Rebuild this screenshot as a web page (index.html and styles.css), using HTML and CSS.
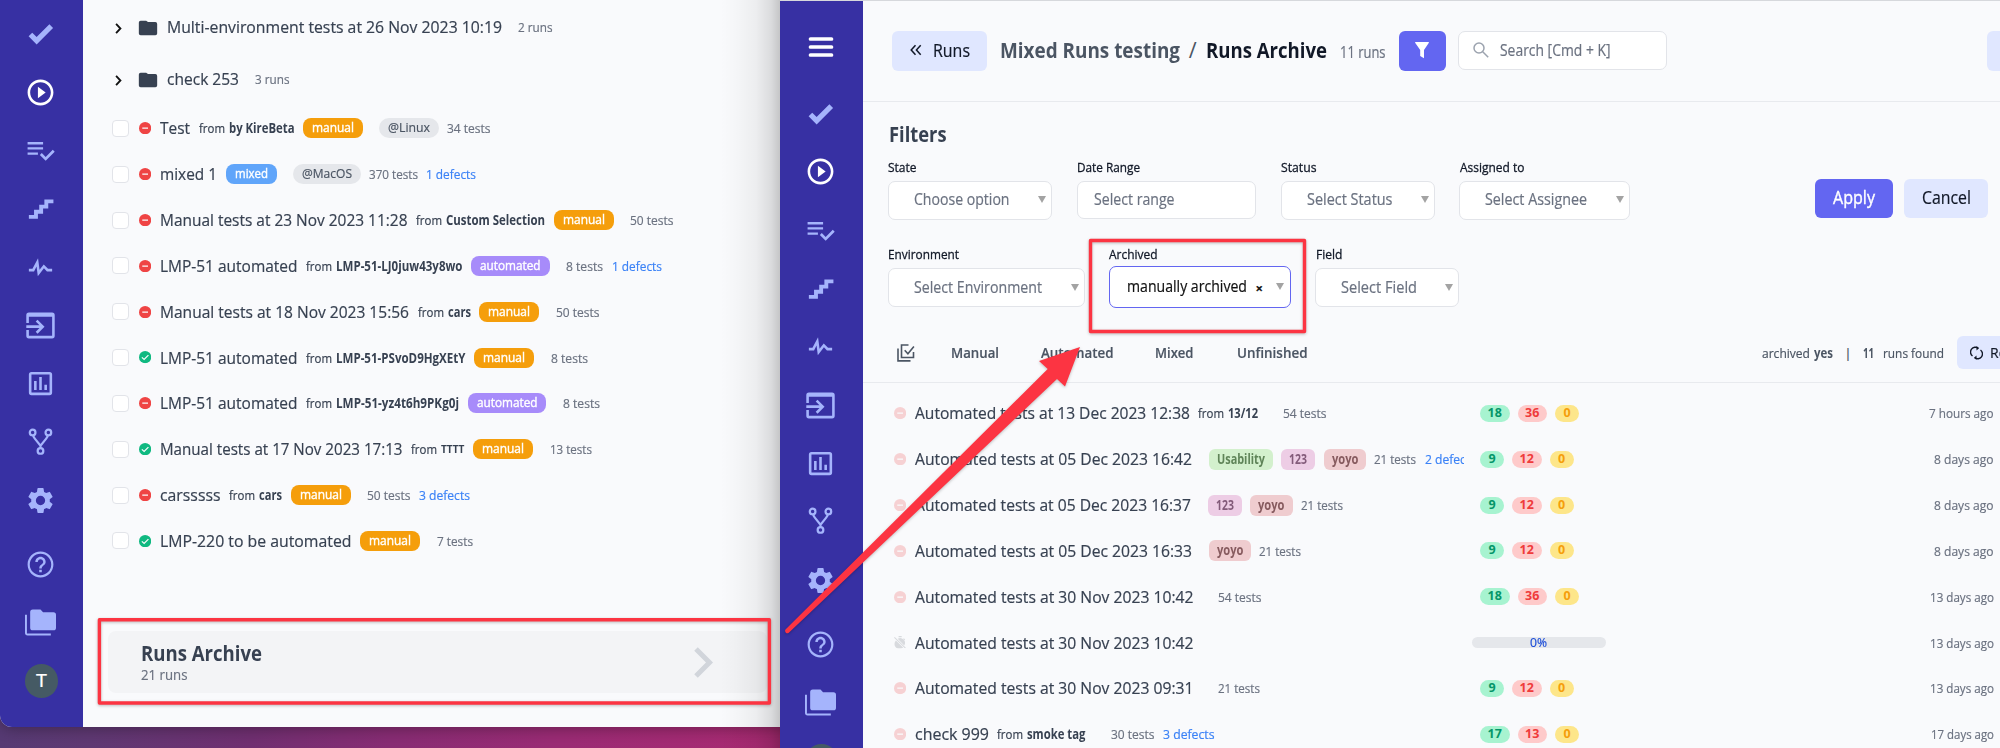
FILE: index.html
```html
<!DOCTYPE html>
<html lang="en">
<head>
<meta charset="utf-8">
<title>Runs Archive</title>
<link rel="stylesheet" href="styles.css">
</head>
<body>
<svg class="sprite" aria-hidden="true">
  <symbol id="i-check" viewBox="0 0 24 24"><path d="M9 20.42 2.79 14.21 5.62 11.38 9 14.77 18.88 4.88 21.71 7.71Z"/></symbol>
  <symbol id="i-play" viewBox="0 0 24 24"><path d="M10 16.5l6-4.5-6-4.5v9zM12 2C6.48 2 2 6.48 2 12s4.480 10 10 10 10-4.480 10-10S17.520 2 12 2zm0 18c-4.410 0-8-3.590-8-8s3.590-8 8-8 8 3.590 8 8-3.590 8-8 8z"/></symbol>
  <symbol id="i-list" viewBox="0 0 24 24"><path d="M14 9.500H2v1.800h12v-1.800zm0-4H2v1.800h12V5.500zM2 15.300h8v-1.800H2v1.800zM21.500 11.500 23 13l-6.990 7-4.510-4.500L13 14l3.010 3 5.490-5.500z"/></symbol>
  <symbol id="i-stairs" viewBox="0 0 24 24"><path d="M15 5v4h-4v4H7v4H3v3h7v-4h4v-4h4V8h4V5h-7Z"/></symbol>
  <symbol id="i-pulse" viewBox="0 0 24 24"><path d="M3 13h2.790L10.100 4.790l1.180 8.960L14.500 9.660 17.830 13H21v2h-4l-2.330-2.330-4.750 6.060-.980-7.420L7 15H3v-2Z"/></symbol>
  <symbol id="i-import" viewBox="0 0 24 24"><path d="M21 2H3a2 2 0 0 0-2 2v6h2V5.300h18V20H3v-4.500H1V20a2 2 0 0 0 2 2h18a2 2 0 0 0 2-2V4a2 2 0 0 0-2-2z"/><path d="M1 12.900h12M9 8.200l4.700 4.700L9 17.600" fill="none" stroke="currentColor" stroke-width="2"/></symbol>
  <symbol id="i-chart" viewBox="0 0 24 24"><path d="M9 17H7v-7h2v7zm4 0h-2V7h2v10zm4 0h-2v-4h2v4zm2 2H5V5h14v14zm0-16H5a2 2 0 0 0-2 2v14a2 2 0 0 0 2 2h14a2 2 0 0 0 2-2V5a2 2 0 0 0-2-2z"/></symbol>
  <symbol id="i-fork" viewBox="0 0 24 24"><g fill="none" stroke="currentColor" stroke-width="1.700"><circle cx="5.900" cy="4.200" r="2.200"/><circle cx="18.100" cy="4.200" r="2.200"/><circle cx="12" cy="18.500" r="2.200"/><path d="M6.200 6.400c.2 1 .5 1.500 1.400 2.600L12 14.500l4.400-5.500c.9-1.100 1.200-1.600 1.400-2.600M12 14.200v2.200"/></g></symbol>
  <symbol id="i-gear" viewBox="0 0 24 24"><path d="M19.140 12.940c.04-.3.06-.61.06-.94s-.02-.64-.07-.94l2.030-1.580a.49.49 0 0 0 .12-.61l-1.920-3.320a.488.488 0 0 0-.59-.22l-2.390.96c-.5-.38-1.030-.7-1.620-.94l-.36-2.540a.484.484 0 0 0-.48-.41h-3.840c-.24 0-.43.17-.47.41l-.36 2.540c-.59.24-1.130.57-1.620.94l-2.390-.96c-.22-.08-.47 0-.59.22L2.740 8.870c-.12.21-.08.47.12.61l2.030 1.580c-.05.3-.09.63-.09.94s.02.64.07.94l-2.030 1.580a.49.49 0 0 0-.12.61l1.920 3.320c.12.22.37.29.59.22l2.390-.96c.5.38 1.030.7 1.620.94l.36 2.540c.05.24.24.41.48.41h3.840c.24 0 .44-.17.47-.41l.36-2.540c.59-.24 1.130-.56 1.620-.94l2.390.96c.22.08.47 0 .59-.22l1.920-3.320c.12-.22.07-.47-.12-.61l-2.010-1.580zM12 15.600A3.600 3.600 0 1 1 12 8.400a3.600 3.600 0 0 1 0 7.200z"/></symbol>
  <symbol id="i-help" viewBox="0 0 24 24"><path d="M11 18h2v-2h-2v2zm1-16C6.480 2 2 6.480 2 12s4.480 10 10 10 10-4.480 10-10S17.520 2 12 2zm0 18.300a8.300 8.300 0 1 1 0-16.600 8.300 8.300 0 0 1 0 16.600zM12 6c-2.210 0-4 1.790-4 4h1.900c0-1.200.98-2.100 2.100-2.100s2.100.9 2.100 2.100c0 2-3.050 1.750-3.050 5h1.900c0-2.250 3.050-2.500 3.050-5 0-2.210-1.790-4-4-4z"/></symbol>
  <symbol id="i-folders" viewBox="0 0 24 24"><path d="M22 4h-8l-2-2H6a2 2 0 0 0-2 2v12a2 2 0 0 0 2 2h16a2 2 0 0 0 2-2V6a2 2 0 0 0-2-2M1.500 6H0v14a2 2 0 0 0 2 2h18v-1.500H1.500V6Z"/></symbol>
  <symbol id="i-folder" viewBox="0 0 24 24"><path d="M10 4H4a2 2 0 0 0-2 2v12a2 2 0 0 0 2 2h16a2 2 0 0 0 2-2V7.500a2 2 0 0 0-2-2h-8L10 4Z"/></symbol>
  <symbol id="i-menu" viewBox="0 0 24 24"><path d="M1.500 4h21M1.500 12h21M1.500 20h21" stroke="currentColor" stroke-width="3.700" stroke-linecap="round"/></symbol>
  <symbol id="i-failed" viewBox="0 0 12 12"><circle cx="6" cy="6" r="6"/><path d="M3.200 6h5.600" stroke="#fafbfc" stroke-width="1.300"/></symbol>
  <symbol id="i-passed" viewBox="0 0 12 12"><circle cx="6" cy="6" r="6"/><path d="m2.800 6.200 2.200 2.100 4.200-4.300" fill="none" stroke="#fafbfc" stroke-width="1.200"/></symbol>
  <symbol id="i-timeroff" viewBox="0 0 12 12"><path d="M4.500 0h3v1.300h-3zM3.600 2.700A4.700 4.700 0 0 1 10 9.200zM1.900 4.300l7 7A4.700 4.700 0 0 1 1.900 4.300z"/><path d="m.4 1.300 10.800 10.500M9.300 2.600l1.200 1.100" stroke="currentColor" stroke-width="1"/></symbol>
  <symbol id="i-arrow" viewBox="0 0 8 7"><path d="M0 0h8L4 7z"/></symbol>
</svg>

<div class="desktop">
  <section class="window window-back">
    <nav class="sidebar">
      <a class="nav"><svg><use href="#i-check"/></svg></a>
      <a class="nav active"><svg><use href="#i-play"/></svg></a>
      <a class="nav"><svg><use href="#i-list"/></svg></a>
      <a class="nav"><svg><use href="#i-stairs"/></svg></a>
      <a class="nav"><svg><use href="#i-pulse"/></svg></a>
      <a class="nav"><svg><use href="#i-import"/></svg></a>
      <a class="nav"><svg><use href="#i-chart"/></svg></a>
      <a class="nav"><svg><use href="#i-fork"/></svg></a>
      <a class="nav"><svg><use href="#i-gear"/></svg></a>
      <a class="nav help"><svg><use href="#i-help"/></svg></a>
      <a class="nav"><svg><use href="#i-folders"/></svg></a>
      <span class="avatar">T</span>
    </nav>
    <main class="runs">
      <div class="group"><svg class="chev" viewBox="0 0 6 10"><path d="m1 .8 4 4.200-4 4.200"/></svg><svg class="folder"><use href="#i-folder"/></svg><b class="title" data-w="335">Multi-environment tests at 26 Nov 2023 10:19</b><span class="count wide" data-w="34.500">2 runs</span></div>
      <div class="group"><svg class="chev" viewBox="0 0 6 10"><path d="m1 .8 4 4.200-4 4.200"/></svg><svg class="folder"><use href="#i-folder"/></svg><b class="title" data-w="72">check 253</b><span class="count wide" data-w="34.500">3 runs</span></div>

      <div class="run"><i class="box"></i><svg class="st fail"><use href="#i-failed"/></svg><b class="title" data-w="30">Test</b><span class="from" data-w="26">from</span><strong data-w="65.500">by KireBeta</strong><span class="pill manual" data-w="42">manual</span><span class="pill env" data-w="42">@Linux</span><span class="count" data-w="43.500">34 tests</span></div>
      <div class="run"><i class="box"></i><svg class="st fail"><use href="#i-failed"/></svg><b class="title" data-w="57">mixed 1</b><span class="pill mixed" data-w="33">mixed</span><span class="pill env" data-w="50">@MacOS</span><span class="count" data-w="49">370 tests</span><a class="defects" data-w="50">1 defects</a></div>
      <div class="run"><i class="box"></i><svg class="st fail"><use href="#i-failed"/></svg><b class="title" data-w="247.500">Manual tests at 23 Nov 2023 11:28</b><span class="from" data-w="26">from</span><strong data-w="99">Custom Selection</strong><span class="pill manual" data-w="42">manual</span><span class="count wide" data-w="43.500">50 tests</span></div>
      <div class="run"><i class="box"></i><svg class="st fail"><use href="#i-failed"/></svg><b class="title" data-w="137.500">LMP-51 automated</b><span class="from" data-w="26">from</span><strong data-w="126.500">LMP-51-LJ0juw43y8wo</strong><span class="pill auto" data-w="60.500">automated</span><span class="count wide" data-w="37">8 tests</span><a class="defects" data-w="50">1 defects</a></div>
      <div class="run"><i class="box"></i><svg class="st fail"><use href="#i-failed"/></svg><b class="title" data-w="249">Manual tests at 18 Nov 2023 15:56</b><span class="from" data-w="26">from</span><strong data-w="23">cars</strong><span class="pill manual" data-w="42">manual</span><span class="count wide" data-w="43.500">50 tests</span></div>
      <div class="run"><i class="box"></i><svg class="st pass"><use href="#i-passed"/></svg><b class="title" data-w="137.500">LMP-51 automated</b><span class="from" data-w="26">from</span><strong data-w="129.500">LMP-51-PSvoD9HgXEtY</strong><span class="pill manual" data-w="42">manual</span><span class="count wide" data-w="37">8 tests</span></div>
      <div class="run"><i class="box"></i><svg class="st fail"><use href="#i-failed"/></svg><b class="title" data-w="137.500">LMP-51 automated</b><span class="from" data-w="26">from</span><strong data-w="123">LMP-51-yz4t6h9PKg0j</strong><span class="pill auto" data-w="60.500">automated</span><span class="count wide" data-w="37">8 tests</span></div>
      <div class="run"><i class="box"></i><svg class="st pass"><use href="#i-passed"/></svg><b class="title" data-w="242.500">Manual tests at 17 Nov 2023 17:13</b><span class="from" data-w="26">from</span><strong data-w="23.500" class="tiny">ТТТТ</strong><span class="pill manual" data-w="42">manual</span><span class="count wide" data-w="42">13 tests</span></div>
      <div class="run"><i class="box"></i><svg class="st fail"><use href="#i-failed"/></svg><b class="title" data-w="60.500">carsssss</b><span class="from" data-w="26">from</span><strong data-w="23">cars</strong><span class="pill manual" data-w="42">manual</span><span class="count wide" data-w="43.500">50 tests</span><a class="defects" data-w="51">3 defects</a></div>
      <div class="run"><i class="box"></i><svg class="st pass"><use href="#i-passed"/></svg><b class="title" data-w="191.500">LMP-220 to be automated</b><span class="pill manual" data-w="42">manual</span><span class="count wide" data-w="36">7 tests</span></div>

      <div class="archive">
        <div>
          <h2 data-w="121">Runs Archive</h2>
          <p data-w="46.500">21 runs</p>
        </div>
        <svg viewBox="0 0 19 31"><path d="M2 2l13.500 13.500L2 29"/></svg>
      </div>
    </main>
  </section>

  <section class="window window-front">
    <nav class="sidebar">
      <a class="nav menu"><svg><use href="#i-menu"/></svg></a>
      <a class="nav"><svg><use href="#i-check"/></svg></a>
      <a class="nav active"><svg><use href="#i-play"/></svg></a>
      <a class="nav"><svg><use href="#i-list"/></svg></a>
      <a class="nav"><svg><use href="#i-stairs"/></svg></a>
      <a class="nav"><svg><use href="#i-pulse"/></svg></a>
      <a class="nav"><svg><use href="#i-import"/></svg></a>
      <a class="nav"><svg><use href="#i-chart"/></svg></a>
      <a class="nav"><svg><use href="#i-fork"/></svg></a>
      <a class="nav"><svg><use href="#i-gear"/></svg></a>
      <a class="nav help"><svg><use href="#i-help"/></svg></a>
      <a class="nav"><svg><use href="#i-folders"/></svg></a>
      <span class="avatar"></span>
    </nav>
    <main class="page">
      <header class="topbar">
        <button class="back"><svg viewBox="0 0 12 12"><path d="M5.500 1.200 1.200 6l4.300 4.800M10.700 1.200 6.400 6l4.300 4.800"/></svg><span data-w="37">Runs</span></button>
        <h1><span class="project" data-w="180">Mixed Runs testing</span><span class="slash">/</span><span data-w="121">Runs Archive</span></h1>
        <span class="total" data-w="45.500">11 runs</span>
        <button class="funnel"><svg viewBox="0 0 14 17"><path d="M.3 0h13.400c.3.3.3.700 0 1L9 8v8.300L5.200 14V8L.3 1C0 .7 0 .3.300 0z"/></svg></button>
        <div class="search"><svg viewBox="0 0 16 16"><circle cx="6" cy="6" r="5"/><path d="m9.700 9.700 5.500 5.500"/></svg><span data-w="110.500">Search [Cmd + K]</span></div>
        <span class="more"></span>
      </header>

      <section class="filters">
        <h3 data-w="57.500">Filters</h3>
        <div class="line">
          <div class="field f-state"><label data-w="28.500">State</label><div class="select"><span data-w="95.500">Choose option</span><svg><use href="#i-arrow"/></svg></div></div>
          <div class="field f-date"><label data-w="63">Date Range</label><div class="select plain"><span data-w="80.500">Select range</span></div></div>
          <div class="field f-status"><label data-w="35.500">Status</label><div class="select"><span data-w="85.500">Select Status</span><svg><use href="#i-arrow"/></svg></div></div>
          <div class="field f-assign"><label data-w="64.500">Assigned to</label><div class="select"><span data-w="102">Select Assignee</span><svg><use href="#i-arrow"/></svg></div></div>
          <div class="actions"><button class="apply"><span data-w="42">Apply</span></button><button class="cancel"><span data-w="49">Cancel</span></button></div>
        </div>
        <div class="line second">
          <div class="field f-env"><label data-w="71">Environment</label><div class="select"><span data-w="128">Select Environment</span><svg><use href="#i-arrow"/></svg></div></div>
          <div class="field f-arch"><label data-w="48.500">Archived</label><div class="select focused"><span data-w="120">manually archived</span><em>×</em><svg><use href="#i-arrow"/></svg></div></div>
          <div class="field f-field"><label data-w="26.500">Field</label><div class="select"><span data-w="76">Select Field</span><svg><use href="#i-arrow"/></svg></div></div>
        </div>
      </section>

      <div class="tabs">
        <svg class="multi" viewBox="0 0 18 18"><path d="M11.500 1h-7v12.500h12V8M1 4.500v12.400h12.500M7.700 6.300l3.200 3.400 6-7.200"/></svg>
        <span class="tab t1" data-w="48">Manual</span>
        <span class="tab t2" data-w="72.500">Automated</span>
        <span class="tab t3" data-w="38.500">Mixed</span>
        <span class="tab t4" data-w="70.500">Unfinished</span>
        <div class="found"><span data-w="48">archived</span><strong class="yes" data-w="19">yes</strong><span class="bar">|</span><strong data-w="11">11</strong><span class="rf" data-w="61">runs found</span>
          <button class="reset"><svg viewBox="0 0 13 14"><path d="M8.300 2.200A4.800 4.800 0 0 0 2.500 10M4.700 11.800A4.800 4.800 0 0 0 10.500 4"/><path class="solid" d="M6.500 0v4.600L9 2.200zM6.500 14V9.400L4 11.800z"/></svg><span data-w="36">Reset</span></button></div>
      </div>

      <div class="list">
        <div class="item"><div class="main"><svg class="st fail"><use href="#i-failed"/></svg><b class="title" data-w="275">Automated tests at 13 Dec 2023 12:38</b><span class="from" data-w="26">from</span><strong data-w="30">13/12</strong><span class="count xwide" data-w="43.500">54 tests</span></div><div class="res"><i class="ok two">18</i><i class="ko two">36</i><i class="sk">0</i></div><time data-w="64.500">7 hours ago</time></div>
        <div class="item"><div class="main"><svg class="st fail"><use href="#i-failed"/></svg><b class="title" data-w="277">Automated tests at 05 Dec 2023 16:42</b><span class="tag green first" data-w="48">Usability</span><span class="tag violet" data-w="18">123</span><span class="tag rose" data-w="26.500">yoyo</span><span class="count" data-w="42">21 tests</span><a class="defects" data-w="51">2 defects</a></div><div class="res"><i class="ok">9</i><i class="ko two">12</i><i class="sk">0</i></div><time data-w="59.500">8 days ago</time></div>
        <div class="item"><div class="main"><svg class="st fail"><use href="#i-failed"/></svg><b class="title" data-w="276">Automated tests at 05 Dec 2023 16:37</b><span class="tag violet first" data-w="18">123</span><span class="tag rose" data-w="26.500">yoyo</span><span class="count" data-w="42">21 tests</span></div><div class="res"><i class="ok">9</i><i class="ko two">12</i><i class="sk">0</i></div><time data-w="59.500">8 days ago</time></div>
        <div class="item"><div class="main"><svg class="st fail"><use href="#i-failed"/></svg><b class="title" data-w="277">Automated tests at 05 Dec 2023 16:33</b><span class="tag rose first" data-w="26.500">yoyo</span><span class="count" data-w="42">21 tests</span></div><div class="res"><i class="ok">9</i><i class="ko two">12</i><i class="sk">0</i></div><time data-w="59.500">8 days ago</time></div>
        <div class="item"><div class="main"><svg class="st fail"><use href="#i-failed"/></svg><b class="title" data-w="278.500">Automated tests at 30 Nov 2023 10:42</b><span class="count xwide" data-w="43.500">54 tests</span></div><div class="res"><i class="ok two">18</i><i class="ko two">36</i><i class="sk">0</i></div><time data-w="64">13 days ago</time></div>
        <div class="item"><div class="main"><svg class="st off"><use href="#i-timeroff"/></svg><b class="title" data-w="278.500">Automated tests at 30 Nov 2023 10:42</b></div><div class="res"><div class="progress"><span data-w="17">0%</span></div></div><time data-w="64">13 days ago</time></div>
        <div class="item"><div class="main"><svg class="st fail"><use href="#i-failed"/></svg><b class="title" data-w="278.500">Automated tests at 30 Nov 2023 09:31</b><span class="count xwide" data-w="42">21 tests</span></div><div class="res"><i class="ok">9</i><i class="ko two">12</i><i class="sk">0</i></div><time data-w="64">13 days ago</time></div>
        <div class="item"><div class="main"><svg class="st fail"><use href="#i-failed"/></svg><b class="title" data-w="74">check 999</b><span class="from" data-w="26">from</span><strong data-w="58.500">smoke tag</strong><span class="count xwide" data-w="43.500">30 tests</span><a class="defects" data-w="51.500">3 defects</a></div><div class="res"><i class="ok two">17</i><i class="ko two">13</i><i class="sk">0</i></div><time data-w="63">17 days ago</time></div>
      </div>
    </main>
  </section>

  <!-- Red annotations drawn over both windows -->
  <svg class="marks" viewBox="0 0 2000 748">
    <rect x="99.400" y="619.700" width="670" height="83.300"/>
    <rect x="1090.500" y="240.500" width="214" height="91"/>
    <path d="M785.500 629.500 1047.700 369 1039 361 1080 347 1065 386.500 1057 379 788.500 633a2.400 2.400 0 0 1-3-3.500z"/>
  </svg>
</div>
<script src="script.js"></script>
</body>
</html>
```
FILE: styles.css
```css
* { box-sizing: border-box; }
body { margin: 0; font-family: "Open Sans", "Noto Sans", sans-serif; color: #374151; -webkit-text-stroke: .2px; }
h1, h2, h3, p { margin: 0; }
i, em { font-style: normal; }
svg { display: block; flex: none; fill: currentColor; }
.sprite { position: absolute; width: 0; height: 0; }
[data-w] { display: block; flex: none; white-space: nowrap; }
.cond { display: inline-block; transform-origin: 0 50%; }
button { font: inherit; color: #111827; border: 0; padding: 0; border-radius: 6px; background: #e0e7ff; display: flex; align-items: center; flex: none; text-align: left; }

.desktop { position: relative; width: 2000px; height: 748px; overflow: hidden; background: linear-gradient(90deg, #563a73 0, #5e3872 90px, #6f2f70 250px, #872c73 390px, #9a2b74 560px, #a92a72 780px); }
.window { position: absolute; display: flex; background: #f9fafc; overflow: hidden; }
.window-back { left: 0; top: 0; width: 800px; height: 727px; border-radius: 0 0 0 12px; box-shadow: 0 2px 14px rgba(0,0,0,.3); }
.window-front { left: 780px; top: 0; width: 1220px; height: 748px; border-top: 1px solid #d6d8dc; }
.desktop::before { content: ""; position: absolute; z-index: 1; left: 720px; top: 0; width: 60px; height: 748px; background: linear-gradient(90deg, transparent, rgba(0,0,0,.015) 25%, rgba(0,0,0,.05) 60%, rgba(0,0,0,.12) 85%, rgba(0,0,0,.21)); }

.sidebar { width: 83px; flex: none; background: #3730a3; color: #a5b4fc; display: flex; flex-direction: column; align-items: center; padding: 4.8px 2px 0 0; }
.nav { display: flex; align-items: center; justify-content: center; height: 58.330px; flex: none; }
.nav svg { width: 31px; height: 31px; }
.nav.active, .nav.menu { color: #fff; }
.nav.help { margin-top: 5.500px; }
.nav.menu { height: 67px; margin-bottom: 4px; }
.nav.menu svg { width: 28px; height: 24px; }
.window-front .sidebar { padding-top: 12.500px; }
.avatar { width: 33.500px; height: 33.500px; margin: 12.500px 0 0 2px; border-radius: 50%; background: #455a64; color: #fff; font: 19px/33px Roboto, sans-serif; text-align: center; flex: none; }

.title { font-weight: 400; font-size: 17px; line-height: 24px; }
.from, strong, .count, .defects { font-size: 13.500px; line-height: 20px; }
strong { font-weight: 700; -webkit-text-stroke: 0; }
.count { color: #6b7280; margin-left: 8px; }
.count.wide { margin-left: 16.500px; }
.count.xwide { margin-left: 25px; }
.defects { color: #3b82f6; margin-left: 8.500px; }
.from { margin-left: 8.500px; }
.from + strong { margin-left: 4px; }
strong.tiny { font-size: 10.500px; }
.st { width: 12.300px; height: 12.300px; margin-right: 9px; }
.fail { color: #ef4444; }
.pass { color: #10b981; }
.pill { height: 20px; padding: 0 9px; border-radius: 10px; margin-left: 8.500px; color: #fff; font-size: 13.500px; line-height: 19px; font-weight: 500; box-sizing: content-box; -webkit-text-stroke: .4px; }
.manual { background: #f59e0b; border-radius: 8px; }
.mixed { background: #60a5fa; border-radius: 8px; }
.auto { background: #a78bfa; border-radius: 8px; }
.env { background: #e5e7eb; color: #4b5563; margin-left: 16px; font-weight: 400; -webkit-text-stroke: .2px; }

.runs { flex: 1; padding-top: 1px; }
.group { display: flex; align-items: center; height: 52px; padding-left: 32px; }
.chev { width: 6.500px; height: 11px; fill: none; stroke: #111; stroke-width: 1.700; margin-top: 3px; }
.folder { width: 22px; height: 22px; margin: 2px 7.500px 0 15.500px; }
.run { display: flex; align-items: center; height: 45.850px; padding-left: 29px; }
.group + .run { margin-top: .4px; }
.box { width: 17px; height: 17px; border: 1px solid #e2e4e9; border-radius: 4px; background: #fff; margin-right: 10px; flex: none; }
.archive { margin: 67.200px 0 0 25px; width: 659px; height: 62px; border-radius: 8px; background: #f3f4f6; padding: 9px 54px 0 33px; display: flex; justify-content: space-between; }
.archive h2 { font-size: 21.500px; line-height: 26px; }
h1, h2, h3 { -webkit-text-stroke: 0; }
.archive p { font-size: 15px; line-height: 16px; color: #6b7280; }
.archive svg { width: 19px; height: 31px; margin-top: 7px; fill: none; stroke: #d1d5db; stroke-width: 5; }

.page { flex: 1; min-width: 0; }
.topbar { height: 101px; display: flex; align-items: center; padding: 0 0 1px 29px; border-bottom: 1px solid #e8eaee; }
.back { width: 95px; height: 40px; padding: 0 0 1px 18px; font-size: 17.500px; }
.back svg { width: 12px; height: 12px; fill: none; stroke: #111827; stroke-width: 1.500; margin-right: 11px; }
h1 { display: flex; align-items: center; font-size: 21.500px; line-height: 28px; color: #111827; margin-left: 12.500px; padding-bottom: 1px; }
.project { color: #4b5563; }
.slash { font-weight: 400; color: #4b5563; width: 26.500px; text-align: center; }
.total { font-size: 15.500px; color: #6b7280; margin: 2px 0 0 13px; }
.funnel { width: 47px; height: 40px; margin-left: 13px; justify-content: center; background: #6366f1; }
.funnel svg { width: 14px; height: 17px; color: #fff; }
.search { width: 209px; height: 39px; margin-left: 12px; padding: 0 0 1px 14px; display: flex; align-items: center; border: 1px solid #e2e4e9; border-radius: 7px; background: #fff; font-size: 15.500px; color: #6b7280; }
.search svg { width: 16px; height: 16px; fill: none; stroke: #9ca3af; stroke-width: 1.500; margin-right: 11.500px; }
.more { width: 60px; height: 40px; flex: none; margin-left: auto; margin-right: -47px; border-radius: 6px; background: #e0e7ff; }

.filters { padding: 17.500px 0 0 24.500px; height: 223.500px; }
.filters h3 { font-size: 21px; line-height: 28px; padding-left: 1px; }
.line { display: flex; align-items: flex-start; margin-top: 9px; height: 87.300px; }
.line.second { margin-top: 0; }
.field label { font-size: 13.500px; line-height: 20px; color: #111827; margin-left: .5px; -webkit-text-stroke: .3px; }
.select { height: 39.500px; margin-top: 4px; border: 1px solid #e2e4e9; border-radius: 7px; background: #fff; display: flex; align-items: center; padding: 0 5px 2px 25px; font-size: 15.500px; color: #6b7280; }
.select svg { width: 8px; height: 7px; margin: 1px 0 0 auto; color: #a3a3a3; }
.plain { padding-left: 16.500px; height: 38.500px; padding-bottom: 1px; }
.f-state { width: 164px; margin-right: 25px; }
.f-date { width: 179.500px; margin-right: 24.500px; }
.f-status { width: 154px; margin-right: 24.500px; }
.f-assign { width: 171px; }
.f-env { width: 197px; margin-right: 24px; }
.f-arch { width: 182.500px; margin-right: 24px; }
.f-field { width: 143.500px; }
.focused { border: 1.500px solid #6366f1; height: 42px; margin: 2.500px 0 0; padding: 0 6px 2px 17px; color: #111; }
.focused em { font-size: 13px; font-weight: 700; margin: 4px 0 0 9px; line-height: 14px; }
.actions { display: flex; margin: 22px 12px 0 auto; gap: 11px; font-size: 17.500px; }
.apply { width: 78px; height: 39.500px; background: #6366f1; color: #fff; justify-content: center; padding-bottom: 2px; -webkit-text-stroke: .35px; }
.cancel { width: 84px; height: 39.500px; justify-content: center; padding-bottom: 2px; }

.tabs { height: 57px; display: flex; align-items: center; padding: 0 0 2px 34px; border-bottom: 1px solid #e8eaee; }
.multi { width: 18px; height: 18px; fill: none; stroke: #4b5563; stroke-width: 1.600; }
.tab { font-size: 15px; font-weight: 600; color: #4b5563; padding-bottom: 1px; }
.t1 { margin-left: 35.500px; }
.t2 { margin-left: 42px; }
.t3 { margin-left: 42px; }
.t4 { margin-left: 43px; }
.found { display: flex; align-items: center; margin-left: 455px; font-size: 13.500px; color: #4b5563; flex: none; }
.yes { margin-left: 4px; }
.bar { width: 30px; text-align: center; line-height: 18px; }
.rf { margin-left: 9px; }
.reset { height: 33.500px; width: 90px; margin-left: 12.500px; padding-left: 13px; font-size: 14.500px; }
.reset svg { width: 13px; height: 14px; fill: none; stroke: #111827; stroke-width: 1.400; margin-right: 7px; }
.reset .solid { fill: #111827; stroke: none; }

.list { padding-top: 8px; }
.item { display: flex; align-items: center; height: 45.850px; padding-left: 30.500px; }
.item .main { width: 570.500px; height: 45px; flex: none; overflow: hidden; display: flex; align-items: center; }
.item .fail { opacity: .22; }
.off { color: #d8dade; }
.tag { height: 21px; padding: 0 8px; border-radius: 6px; margin-left: 8.500px; font-size: 13.500px; line-height: 20px; font-weight: 700; box-sizing: content-box; -webkit-text-stroke: 0; }
.tag.first { margin-left: 17px; }
.green { background: #d3f0cd; color: #5f8458; }
.violet { background: #edcde5; color: #835b7a; }
.rose { background: #efcccf; color: #865a5e; }
.res { width: 300px; padding-left: 16px; display: flex; gap: 8px; flex: none; }
.res i { width: 24px; height: 17px; border-radius: 9px; font-size: 12.500px; line-height: 16px; font-weight: 700; text-align: center; -webkit-text-stroke: 0; }
.res .two { width: 29.500px; }
.ok { background: #a7f3d0; color: #059669; }
.ko { background: #fecaca; color: #ef3b3b; }
.sk { background: #fde68a; color: #f59e0b; }
.progress { width: 134px; height: 11px; margin-left: -8.500px; border-radius: 6px; background: #e5e7eb; display: flex; align-items: center; justify-content: center; font-size: 12.500px; line-height: 11px; color: #1d4ed8; }
time { margin: 0 6.500px 0 auto; font-size: 13.500px; color: #6b7280; }

.marks { position: absolute; z-index: 2; left: 0; top: 0; width: 2000px; height: 748px; filter: drop-shadow(0 1px 1.500px rgba(0,0,0,.25)); }
.marks rect { fill: none; stroke: #fc3442; stroke-width: 3.400; stroke-linejoin: round; }
.marks path { fill: #fc3442; }
```
FILE: script.js
```js
// Condenses each label so that its text fills the column width given in data-w.
document.querySelectorAll('[data-w]').forEach(function (el) {
  var inner = document.createElement('span');
  inner.className = 'cond';
  inner.textContent = el.textContent;
  el.textContent = '';
  el.appendChild(inner);
  var target = parseFloat(el.dataset.w);
  var natural = inner.getBoundingClientRect().width;
  inner.style.transform = 'scaleX(' + (target / natural).toFixed(4) + ')';
  el.style.width = target + 'px';
});
```
